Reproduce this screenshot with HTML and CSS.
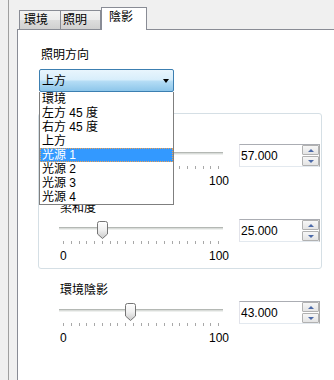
FILE: index.html
```html
<!DOCTYPE html>
<html lang="zh-Hant">

<head>
    <meta charset="UTF-8">
    <meta name="viewport" content="width=device-width, initial-scale=1.0">
    <title>陰影</title>
    <link rel="stylesheet" href="styles.css">
</head>

<body>
    <div class="frame">
        <div class="tabs">
            <div class="tab tab-env">環境</div>
            <div class="tab tab-light">照明</div>
            <div class="tab tab-shadow active">陰影</div>
        </div>

        <div class="panel">
            <div class="field-label">照明方向</div>
            <div class="combo-wrap">
                <div class="combo">
                    <span>上方</span>
                    <span class="arrow"></span>
                </div>
                <ul class="droplist">
                    <li>環境</li>
                    <li>左方 45 度</li>
                    <li>右方 45 度</li>
                    <li>上方</li>
                    <li class="selected">光源 1</li>
                    <li>光源 2</li>
                    <li>光源 3</li>
                    <li>光源 4</li>
                </ul>
            </div>

            <div class="group">
                <!-- first row sits under the open list -->
                <div class="slider-row">
                    <div class="row-label"></div>
                    <div class="controls">
                        <div class="slider">
                            <div class="track-area">
                                <div class="track"></div>
                                <svg class="thumb" style="left: 88px;" width="11" height="18" viewBox="0 0 11 18">
                                    <defs>
                                        <linearGradient id="tg1" x1="0" y1="0" x2="0" y2="1">
                                            <stop offset="0" stop-color="#ffffff"/>
                                            <stop offset="0.5" stop-color="#f0f0f0"/>
                                            <stop offset="1" stop-color="#c9c9c9"/>
                                        </linearGradient>
                                    </defs>
                                    <path d="M0.5 2.5 Q0.5 0.5 2.5 0.5 H8.5 Q10.5 0.5 10.5 2.5 V13 L5.5 17.5 L0.5 13 Z" fill="url(#tg1)" stroke="#757575"/>
                                </svg>
                            </div>
                            <div class="ticks">
                                <i></i><i></i><i></i><i></i><i></i><i></i><i></i>
                                <i></i><i></i><i></i><i></i><i></i><i></i><i></i>
                                <i></i><i></i><i></i><i></i><i></i><i></i><i></i>
                            </div>
                            <div class="scale"><span></span><span>100</span></div>
                        </div>
                        <div class="spinbox">
                            <span class="spin-value">57.000</span>
                            <div class="spin-btns">
                                <div class="spin-btn up"></div>
                                <div class="spin-btn down"></div>
                            </div>
                        </div>
                    </div>
                </div>

                <div class="slider-row">
                    <div class="row-label">柔和度</div>
                    <div class="controls">
                        <div class="slider">
                            <div class="track-area">
                                <div class="track"></div>
                                <svg class="thumb" style="left: 38px;" width="11" height="18" viewBox="0 0 11 18">
                                    <defs>
                                        <linearGradient id="tg2" x1="0" y1="0" x2="0" y2="1">
                                            <stop offset="0" stop-color="#ffffff"/>
                                            <stop offset="0.5" stop-color="#f0f0f0"/>
                                            <stop offset="1" stop-color="#c9c9c9"/>
                                        </linearGradient>
                                    </defs>
                                    <path d="M0.5 2.5 Q0.5 0.5 2.5 0.5 H8.5 Q10.5 0.5 10.5 2.5 V13 L5.5 17.5 L0.5 13 Z" fill="url(#tg2)" stroke="#757575"/>
                                </svg>
                            </div>
                            <div class="ticks">
                                <i></i><i></i><i></i><i></i><i></i><i></i><i></i>
                                <i></i><i></i><i></i><i></i><i></i><i></i><i></i>
                                <i></i><i></i><i></i><i></i><i></i><i></i><i></i>
                            </div>
                            <div class="scale"><span>0</span><span>100</span></div>
                        </div>
                        <div class="spinbox">
                            <span class="spin-value">25.000</span>
                            <div class="spin-btns">
                                <div class="spin-btn up"></div>
                                <div class="spin-btn down"></div>
                            </div>
                        </div>
                    </div>
                </div>
            </div>

            <div class="slider-row outside">
                <div class="row-label">環境陰影</div>
                <div class="controls">
                    <div class="slider">
                        <div class="track-area">
                            <div class="track"></div>
                            <svg class="thumb" style="left: 66px;" width="11" height="18" viewBox="0 0 11 18">
                                <defs>
                                    <linearGradient id="tg3" x1="0" y1="0" x2="0" y2="1">
                                        <stop offset="0" stop-color="#ffffff"/>
                                        <stop offset="0.5" stop-color="#f0f0f0"/>
                                        <stop offset="1" stop-color="#c9c9c9"/>
                                    </linearGradient>
                                </defs>
                                <path d="M0.5 2.5 Q0.5 0.5 2.5 0.5 H8.5 Q10.5 0.5 10.5 2.5 V13 L5.5 17.5 L0.5 13 Z" fill="url(#tg3)" stroke="#757575"/>
                            </svg>
                        </div>
                        <div class="ticks">
                            <i></i><i></i><i></i><i></i><i></i><i></i><i></i>
                            <i></i><i></i><i></i><i></i><i></i><i></i><i></i>
                            <i></i><i></i><i></i><i></i><i></i><i></i><i></i>
                        </div>
                        <div class="scale"><span>0</span><span>100</span></div>
                    </div>
                    <div class="spinbox">
                        <span class="spin-value">43.000</span>
                        <div class="spin-btns">
                            <div class="spin-btn up"></div>
                            <div class="spin-btn down"></div>
                        </div>
                    </div>
                </div>
            </div>
        </div>
    </div>
</body>
</html>
```

FILE: styles.css
```css
body {
    margin: 0;
    height: 380px;
    overflow: hidden;
    background-color: #f0f0f0;
    color: #000000;
    font-family: "Liberation Sans", "Noto Sans CJK TC", sans-serif;
    font-size: 12px;
    line-height: 14px;
}

.frame {
    margin-left: 8px;
    border-left: 1px solid #a0a0a0;
    padding: 7px 0 0 8px;
    height: 373px;
    display: flex;
    flex-direction: column;
}

/* tabs */

.tabs {
    display: flex;
    align-items: flex-end;
    height: 23px;
    margin-bottom: -1px;
    padding-left: 2px;
    position: relative;
    z-index: 1;
}

.tab {
    box-sizing: border-box;
    height: 19px;
    margin-bottom: 1px;
    padding-top: 2px;
    border: 1px solid #898c95;
    border-bottom: none;
    background: linear-gradient(#f3f3f3, #ebebeb 50%, #dddddd 50%, #d0d0d0);
}

.tab + .tab {
    border-left: none;
}

.tab-env {
    width: 42px;
    padding-left: 4px;
}

.tab-light {
    width: 40px;
    padding-left: 2px;
}

.tab.active {
    width: 46px;
    height: 23px;
    margin-bottom: 0;
    padding-top: 2px;
    padding-left: 7px;
    background: #ffffff;
    border-left: 1px solid #898c95;
}

/* panel */

.panel {
    flex: 1;
    background-color: #ffffff;
    border-top: 1px solid #898c95;
    border-left: 1px solid #898c95;
    padding: 18px 0 0 20px;
}

.field-label {
    margin-left: 3px;
}

.combo-wrap {
    position: relative;
    width: 135px;
    margin: 7px 0 0 1px;
}

.combo {
    box-sizing: border-box;
    height: 23px;
    display: flex;
    align-items: center;
    justify-content: space-between;
    padding: 0 4px 0 2px;
    border: 1px solid #3c7fb1;
    border-radius: 2px;
    background: linear-gradient(#e8f5fd, #d8eefb 45%, #b3dcf5 55%, #8dc6ea);
}

.arrow {
    width: 0;
    height: 0;
    border-left: 3.5px solid transparent;
    border-right: 3.5px solid transparent;
    border-top: 4px solid #000000;
    margin-top: 1px;
}

.droplist {
    position: absolute;
    top: 23px;
    left: 0;
    z-index: 2;
    box-sizing: border-box;
    width: 135px;
    margin: 0;
    padding: 0;
    list-style: none;
    background: #ffffff;
    border: 1px solid #7f7f7f;
    border-top: none;
}

.droplist li {
    height: 14px;
    padding-left: 2px;
}

.droplist li.selected {
    background-color: #3399ff;
    color: #ffffff;
    outline: 1px dotted #f0a050;
    outline-offset: -1px;
}

/* group box */

.group {
    width: 284px;
    box-sizing: border-box;
    margin-top: 21px;
    padding: 12px 0 5px 20px;
    border: 1px solid #d5dfe5;
    border-radius: 3px;
}

.slider-row + .slider-row {
    margin-top: 13px;
}

.slider-row.outside {
    margin: 14px 0 0 21px;
}

.row-label {
    height: 14px;
    padding-left: 1px;
}

.controls {
    display: flex;
    gap: 16px;
    margin-top: 4px;
}

.slider {
    width: 164px;
}

.track-area {
    position: relative;
    height: 22px;
}

.track {
    position: absolute;
    top: 8px;
    left: 0;
    right: 0;
    height: 3px;
    background: linear-gradient(#b4b8b4 0 1px, #d9dcd9 1px 2px, #eef0ee 2px);
}

.thumb {
    position: absolute;
    top: 2px;
    display: block;
}

.ticks {
    display: flex;
    justify-content: space-between;
    width: 156px;
    height: 3px;
    margin-left: 4px;
}

.ticks i {
    width: 1px;
    height: 3px;
    background-color: #a8a8a8;
}

.scale {
    display: flex;
    justify-content: space-between;
    width: 169px;
    height: 14px;
    margin: 5px 0 0 1px;
}

/* spin box */

.spinbox {
    box-sizing: border-box;
    width: 81px;
    height: 23px;
    display: flex;
    align-items: center;
    justify-content: space-between;
    padding-left: 1px;
    border: 1px solid;
    border-color: #abadb3 #a9a9a9 #e3e9ef #e2e3ea;
    background: #ffffff;
}

.spin-btns {
    display: flex;
    flex-direction: column;
    gap: 1px;
    width: 17px;
    height: 21px;
    box-sizing: border-box;
}

.spin-btn {
    flex: 1;
    display: flex;
    align-items: center;
    justify-content: center;
    border: 1px solid #b1b1b1;
    border-radius: 1px;
    background: linear-gradient(#f7f7f7, #e4e4e4);
}

.spin-btn::after {
    content: "";
    width: 0;
    height: 0;
    border-left: 3px solid transparent;
    border-right: 3px solid transparent;
}

.spin-btn.up::after {
    border-bottom: 3px solid #4d6aa8;
}

.spin-btn.down::after {
    border-top: 3px solid #4d6aa8;
}
```
